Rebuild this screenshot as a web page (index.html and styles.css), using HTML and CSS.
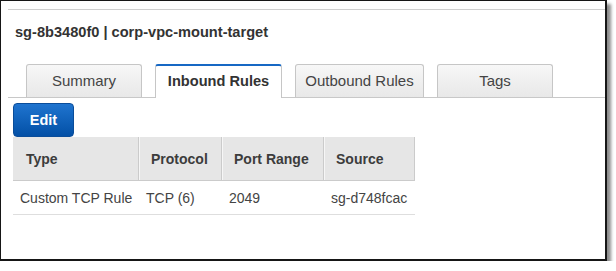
FILE: index.html
```html
<!DOCTYPE html>
<html lang="en">
<head>
  <meta charset="UTF-8">
  <meta name="viewport" content="width=device-width, initial-scale=1.0">
  <title>sg-8b3480f0 | corp-vpc-mount-target</title>
  <link rel="stylesheet" href="styles.css">
</head>
<body>

  <div class="frame">
    <div class="panel">
      <h2 class="title">sg-8b3480f0 | corp-vpc-mount-target</h2>

      <div class="tabs">
        <div class="tab tab-summary">Summary</div>
        <div class="tab tab-inbound active">Inbound Rules</div>
        <div class="tab tab-outbound">Outbound Rules</div>
        <div class="tab tab-tags">Tags</div>
      </div>

      <div class="content">
        <button class="edit-btn" type="button">Edit</button>

        <table class="rules">
          <colgroup>
            <col class="col-type">
            <col class="col-protocol">
            <col class="col-port">
            <col class="col-source">
          </colgroup>
          <thead>
            <tr>
              <th>Type</th>
              <th>Protocol</th>
              <th>Port Range</th>
              <th>Source</th>
            </tr>
          </thead>
          <tbody>
            <tr>
              <td>Custom TCP Rule</td>
              <td>TCP (6)</td>
              <td>2049</td>
              <td>sg-d748fcac</td>
            </tr>
          </tbody>
        </table>
      </div>
    </div>
  </div>

</body>
</html>
```

FILE: styles.css
```css
body {
  margin: 0;
  background-color: #fff;
  font-family: 'Liberation Sans', Arial, sans-serif;
  color: #444;
}
.frame {
  width: 604px;
  height: 250px;
  padding-top: 8px;
  background-color: #fff;
  border-style: solid;
  border-color: #161616;
  border-width: 1px 2px 2px 1px;
  box-shadow: 4px 4px 3px rgba(0, 0, 0, 0.45);
}
.panel {
  margin-left: 7px;
  border-top: 1px solid #cfcfcf;
}
.title {
  margin: 13px 0 0 0;
  padding-left: 7px;
  font-size: 14.6px;
  line-height: 18px;
  font-weight: bold;
  color: #333;
}
.tabs {
  display: flex;
  align-items: flex-end;
  gap: 13px;
  height: 33px;
  margin-top: 23px;
  padding-left: 18px;
  border-bottom: 1px solid #c8c8c8;
}
.tab {
  box-sizing: border-box;
  height: 33px;
  border: 1px solid #c6c6c6;
  border-bottom: none;
  border-radius: 3px 3px 0 0;
  background: linear-gradient(#f7f7f7, #e8e8e8);
  font-size: 15px;
  line-height: 32px;
  text-align: center;
  color: #444;
}
.tab.active {
  height: 34px;
  margin-bottom: -1px;
  border-top: 2px solid #1668c4;
  background: #fff;
  font-size: 14.6px;
  font-weight: bold;
  color: #333;
  line-height: 31px;
}
.tab-summary { width: 116px; }
.tab-inbound { width: 127px; }
.tab-outbound { width: 129px; }
.tab-tags { width: 116px; }

.content {
  padding-left: 5px;
}
.edit-btn {
  display: block;
  width: 61px;
  height: 34px;
  margin-top: 5px;
  padding: 0;
  border: 1px solid #0a4d9a;
  border-radius: 4px;
  background: linear-gradient(#1f74cf, #0350a6);
  color: #fff;
  font-family: inherit;
  font-size: 14.5px;
  font-weight: bold;
}
.rules {
  width: 402px;
  table-layout: fixed;
  border-collapse: separate;
  border-spacing: 0;
  font-size: 14px;
}
.col-type { width: 126px; }
.col-protocol { width: 83px; }
.col-port { width: 102px; }
.col-source { width: 91px; }
.rules th {
  height: 43px;
  padding: 0 0 0 12px;
  background-color: #e6e6e6;
  border-right: 1px solid #cbcbcb;
  border-bottom: 1px solid #cbcbcb;
  box-shadow: inset 1px 0 0 #f6f6f6;
  text-align: left;
  font-weight: bold;
  color: #3c3c3c;
}
.rules th:first-child {
  padding-left: 13px;
  box-shadow: none;
}
.rules td {
  height: 33px;
  padding: 0 0 0 7px;
  border-bottom: 1px solid #dedede;
  color: #444;
  white-space: nowrap;
}
```
